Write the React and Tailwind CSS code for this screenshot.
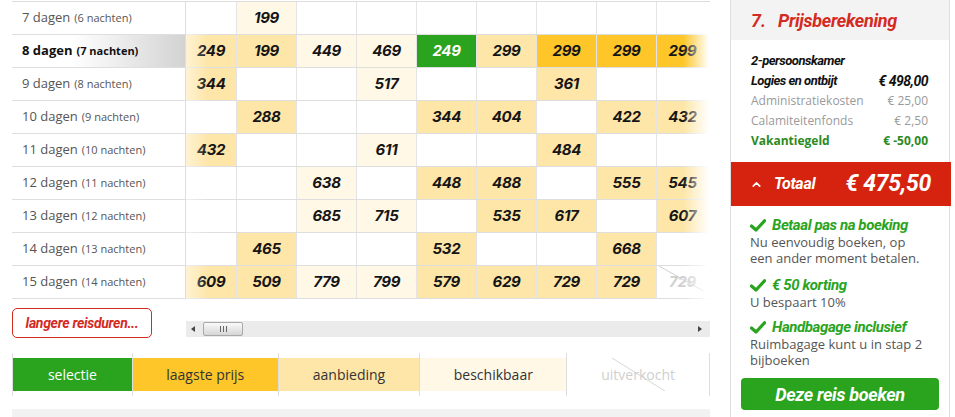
import { ChevronUp } from "lucide-react";

const SANS = { fontFamily: '"Open Sans", "DejaVu Sans", sans-serif' };
const NUM = { fontFamily: 'Inter, "Liberation Sans", sans-serif' };
const HEAD = { fontFamily: 'Roboto, "Liberation Sans", sans-serif' };

const CELL_BG = {
  a: "bg-[#fee6a8]",
  b: "bg-[#fff8e7]",
  l: "bg-[#fec629]",
  s: "bg-[#2aa41e]",
  u: "bg-white",
};

// each row: label, nights, cells (9 columns) as [kind, price] or null
const ROWS = [
  { d: 7, n: 6, c: [null, ["b", 199], null, null, null, null, null, null, null] },
  { d: 8, n: 7, active: true, c: [["a", 249], ["a", 199], ["b", 449], ["b", 469], ["s", 249], ["a", 299], ["l", 299], ["l", 299], ["l", 299]] },
  { d: 9, n: 8, c: [["a", 344], null, null, ["b", 517], null, null, ["a", 361], null, null] },
  { d: 10, n: 9, c: [null, ["a", 288], null, null, ["a", 344], ["a", 404], null, ["a", 422], ["a", 432]] },
  { d: 11, n: 10, c: [["a", 432], null, null, ["b", 611], null, null, ["a", 484], null, null] },
  { d: 12, n: 11, c: [null, null, ["b", 638], null, ["a", 448], ["a", 488], null, ["a", 555], ["a", 545]] },
  { d: 13, n: 12, c: [null, null, ["b", 685], ["b", 715], null, ["a", 535], ["a", 617], null, ["a", 607]] },
  { d: 14, n: 13, c: [null, ["a", 465], null, null, ["a", 532], null, null, ["a", 668], null] },
  { d: 15, n: 14, c: [["a", 609], ["a", 509], ["b", 779], ["b", 799], ["a", 579], ["a", 629], ["a", 729], ["a", 729], ["u", 729]] },
];

const LEGEND = [
  { label: "selectie", w: "w-[120px]", cls: "bg-[#2aa41e] text-white" },
  { label: "laagste prijs", w: "w-[146px]", cls: "bg-[#fec629] text-[#333]" },
  { label: "aanbieding", w: "w-[142px]", cls: "bg-[#fee6a8] text-[#333]" },
  { label: "beschikbaar", w: "w-[147px]", cls: "bg-[#fff8e7] text-[#333]" },
  { label: "uitverkocht", w: "w-[143px]", cls: "bg-white text-[#cfcfcf]", sold: true },
];

function Check() {
  return (
    <svg width="16" height="13" viewBox="0 0 16 13" className="shrink-0">
      <path d="M1.5 7 L6 11 L14.5 1.8" fill="none" stroke="#2aa41e" strokeWidth="3.2" strokeLinecap="round" strokeLinejoin="round" />
    </svg>
  );
}

function Feature({ title, lines, className }) {
  return (
    <div className={className}>
      <div className="flex items-center gap-[6px] h-[18px]">
        <Check />
        <span style={HEAD} className="text-[15px] font-bold italic text-[#2aa41e] tracking-[-0.4px]">{title}</span>
      </div>
      {lines.map((l) => (
        <div key={l} style={SANS} className="text-[13px] leading-[16px] text-[#555]">{l}</div>
      ))}
    </div>
  );
}

export default function App() {
  return (
    <div className="w-[955px] h-[417px] overflow-hidden bg-white flex">
      {/* left: calendar */}
      <div className="w-[730px] pl-3 pr-5">
        <div className="flex mt-[1px] border-t border-[#dedede]">
          <div className="w-[174px] border-r border-[#dedede]">
            {ROWS.map((r) => (
              <div key={r.d}
                style={SANS}
                className={`h-[33px] border-b border-[#dedede] pl-[10px] flex items-center ${r.active ? "bg-linear-to-r from-white from-35% to-[#d3d3d3] font-bold text-[#111]" : "text-[#555]"}`}>
                <span className="text-[13px]">{r.d} dagen</span>
                <span className="text-[11px] ml-[4px]">({r.n} nachten)</span>
              </div>
            ))}
          </div>
          <div className="relative w-[523px]">
            {ROWS.map((r) => (
              <div key={r.d} className="grid grid-cols-[51px_repeat(7,60px)_52px] h-[33px] border-b border-[#dedede]">
                {r.c.map((cell, i) => (
                  <div key={i}
                    style={NUM}
                    className={`relative h-full border-r border-[#e4e4e4] flex items-center justify-center text-[15px] font-bold italic tracking-[-0.3px] ${cell ? CELL_BG[cell[0]] : ""} ${cell && cell[0] === "s" ? "text-white" : cell && cell[0] === "u" ? "text-[#cfcfcf]" : "text-[#151515]"}`}>
                    {cell && cell[0] === "u" && (
                      <svg className="absolute inset-0 w-full h-full">
                        <line x1="2" y1="0" x2="48" y2="26" stroke="#cfcfcf" strokeWidth="1" />
                      </svg>
                    )}
                    {cell && <span className="relative">{cell[1]}</span>}
                  </div>
                ))}
              </div>
            ))}
            <div className="absolute left-0 top-0 bottom-0 w-[22px] bg-linear-to-r from-white/50 to-transparent pointer-events-none" />
            <div className="absolute right-0 top-0 bottom-0 w-[26px] bg-linear-to-r from-transparent to-white pointer-events-none" />
          </div>
        </div>

        {/* controls */}
        <div className="flex items-end mt-[9px] h-[30px]">
          <button style={HEAD}
            className="w-[140px] h-[30px] border border-[#d42a1f] rounded-[5px] text-[#d42a1f] text-[14px] font-bold italic tracking-[-0.3px]">
            langere reisduren...
          </button>
          <div className="ml-[34px] mb-[1px] w-[524px] h-[16px] bg-[#ebebeb] flex items-center relative">
            <span className="ml-[5px] w-0 h-0 border-y-[3px] border-y-transparent border-r-[4px] border-r-[#444]" />
            <div className="ml-[8px] w-[40px] h-[14px] rounded-[2px] border border-[#a9a9a9] bg-linear-to-b from-[#fafafa] to-[#d6d6d6] flex items-center justify-center gap-[2px]">
              <span className="w-px h-[6px] bg-[#666]" />
              <span className="w-px h-[6px] bg-[#666]" />
              <span className="w-px h-[6px] bg-[#666]" />
            </div>
            <span className="ml-auto mr-[8px] w-0 h-0 border-y-[3px] border-y-transparent border-l-[4px] border-l-[#444]" />
          </div>
        </div>

        {/* legend */}
        <div className="flex mt-[15px] border-r border-[#dedede]" style={SANS}>
          {LEGEND.map((l) => (
            <div key={l.label} className={`${l.w} border-l border-[#dedede] py-[5px]`}>
              <div className={`relative h-[33px] flex items-center justify-center text-[14px] ${l.cls}`}>
                {l.sold && (
                  <svg className="absolute inset-0 w-full h-full">
                    <line x1="45" y1="0" x2="98" y2="33" stroke="#d6d6d6" strokeWidth="1" />
                  </svg>
                )}
                <span className="relative">{l.label}</span>
              </div>
            </div>
          ))}
        </div>
        <div className="mt-[13px] h-[10px] bg-[#f2f2f2]" />
      </div>

      {/* right: price panel */}
      <div className="w-[220px] border-x border-[#dedede] flex flex-col">
        <div style={HEAD} className="h-[40px] bg-[#f3f3f3] flex items-center pl-[20px] text-[#d42a1f] text-[18px] font-bold italic">
          <span className="w-[27px]">7.</span>
          <span className="tracking-[-0.3px]">Prijsberekening</span>
        </div>
        <div className="pl-[20px] pr-[21px] pt-[11px] pb-[11px]">
          <div style={HEAD} className="h-[20px] flex items-center text-[13px] font-bold italic text-[#111] tracking-[-0.5px]">2-persoonskamer</div>
          <div style={HEAD} className="h-[20px] flex items-center justify-between text-[13px] font-bold italic text-[#111] tracking-[-0.5px]">
            <span>Logies en ontbijt</span>
            <span className="text-[14px]">€ 498,00</span>
          </div>
          <div style={SANS} className="h-[20px] flex items-center justify-between text-[12px] text-[#9a9a9a]">
            <span>Administratiekosten</span>
            <span>€ 25,00</span>
          </div>
          <div style={SANS} className="h-[20px] flex items-center justify-between text-[12px] text-[#9a9a9a]">
            <span>Calamiteitenfonds</span>
            <span>€ 2,50</span>
          </div>
          <div style={SANS} className="h-[20px] flex items-center justify-between text-[12px] font-bold text-[#2c8a1e]">
            <span>Vakantiegeld</span>
            <span>€ -50,00</span>
          </div>
        </div>
        <div style={HEAD} className="h-[44px] -mr-[2px] bg-[#d6230f] flex items-center pl-[20px] pr-[20px] text-white font-bold italic">
          <ChevronUp size={13} strokeWidth={3} className="ml-[-1px]" />
          <span className="ml-[11px] text-[16px] tracking-[-0.3px]">Totaal</span>
          <span className="ml-auto text-[23px] tracking-[-0.3px]">€ 475,50</span>
        </div>
        <div className="pl-[19px] pr-[8px] pt-[10px]">
          <Feature title="Betaal pas na boeking" lines={["Nu eenvoudig boeken, op", "een ander moment betalen."]} />
          <Feature className="mt-[10px]" title="€ 50 korting" lines={["U bespaart 10%"]} />
          <Feature className="mt-[8px]" title="Handbagage inclusief" lines={["Ruimbagage kunt u in stap 2", "bijboeken"]} />
        </div>
        <div className="px-[10px] mt-[10px]">
          <button style={HEAD} className="w-full h-[32px] rounded-[4px] bg-[#2aa41e] text-white text-[18px] font-bold italic tracking-[-0.3px]">
            Deze reis boeken
          </button>
        </div>
      </div>
    </div>
  );
}
